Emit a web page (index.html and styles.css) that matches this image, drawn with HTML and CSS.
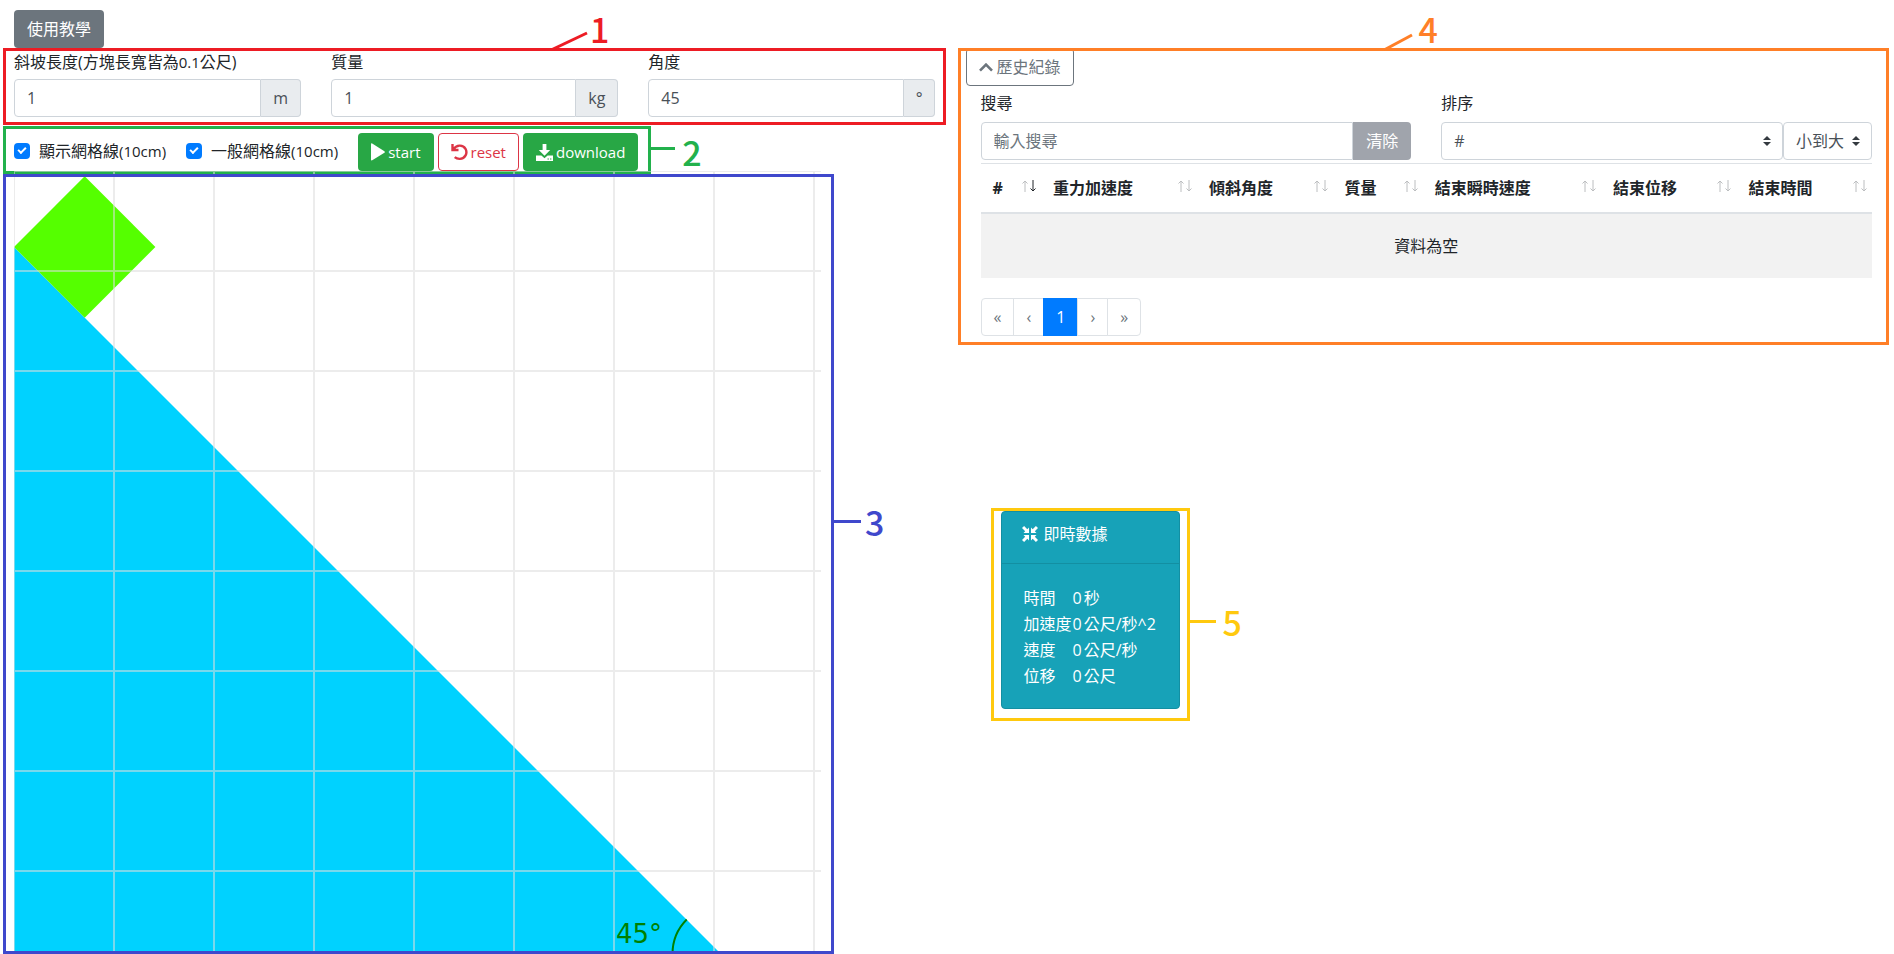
FILE: index.html
```html
<!DOCTYPE html>
<html lang="zh-Hant">
<head>
<meta charset="utf-8">
<meta name="viewport" content="width=device-width, initial-scale=1">
<title>斜坡模擬</title>
<link rel="stylesheet" href="styles.css">
</head>
<body>
<main class="page">
  <div class="column">
    <div class="toolbar"><button class="btn btn-secondary" type="button">使用教學</button></div>

    <section class="params">
      <div class="field">
        <label for="length">斜坡長度(方塊長寬皆為<span class="latin">0.1</span>公尺)</label>
        <div class="input-group"><input class="control" id="length" type="text" value="1"><span class="addon">m</span></div>
      </div>
      <div class="field">
        <label for="mass">質量</label>
        <div class="input-group"><input class="control" id="mass" type="text" value="1"><span class="addon">kg</span></div>
      </div>
      <div class="field">
        <label for="angle">角度</label>
        <div class="input-group"><input class="control" id="angle" type="text" value="45"><span class="addon">°</span></div>
      </div>
      <div class="frame frame-red">
        <svg class="leader leader-params" width="38" height="20" viewBox="0 0 38 20"><path d="M1 19 37 2" stroke="#ed1c24" stroke-width="3"/></svg>
        <span class="number number-params">1</span>
      </div>
    </section>

    <section class="actions">
      <label class="check"><input type="checkbox" checked><span>顯示網格線<span class="latin">(10cm)</span></span></label>
      <label class="check"><input type="checkbox" checked><span>一般網格線<span class="latin">(10cm)</span></span></label>
      <div class="buttons">
        <button class="btn btn-success latin" type="button"><svg width="14" height="18" viewBox="0 0 14 18"><path fill="currentColor" d="M0 1.2Q0 0 1.200.5L13.400 8.200q1 .8 0 1.600L1.200 17.300Q0 17.800 0 16.600z"/></svg>start</button>
        <button class="btn btn-outline-danger latin" type="button"><svg width="17" height="18" viewBox="0 0 17 18"><path fill="none" stroke="currentColor" stroke-width="2.4" d="M1.500 1v6h6M2.100 6.400C5.500 1.600 11.900 1.400 14.500 5.800c2.400 4.400-.4 9.800-5.600 10.100-2.200.1-3.900-.6-5.200-1.700"/></svg>reset</button>
        <button class="btn btn-success latin" type="button"><svg width="17" height="17" viewBox="0 0 17 17"><path fill="currentColor" d="M6.6 0h3.8v6h3.8L8.5 11.8 2.8 6h3.8zM0 11.4h5.4l3.1 2.8 3.1-2.8H17V17H0z"/><path fill="#28a745" d="M11.5 14.4h1.4v1.2h-1.4zM14 14.4h1.4v1.2H14z"/></svg>download</button>
      </div>
      <div class="frame frame-green"><span class="line line-green"></span><span class="number number-actions">2</span></div>
    </section>

    <section class="stage">
      <div class="viewport">
        <svg class="scene" width="807" height="783" viewBox="0 0 807 783" role="img" aria-label="斜坡">
          <path fill="#00d2ff" d="M0 76 707 783H0z"/>
          <path fill="#55ff00" d="M0 76 70.7 5.3 141.4 76 70.7 146.7z"/>
          <path fill="none" stroke="#dcdcdc" stroke-opacity=".55" stroke-width="2" d="M0 0V783M100 0V783M200 0V783M300 0V783M400 0V783M500 0V783M600 0V783M700 0V783M800 0V783M0 0H807M0 100H807M0 200H807M0 300H807M0 400H807M0 500H807M0 600H807M0 700H807"/>
          <path fill="none" stroke="#008000" stroke-width="2" d="M658.5 783a49 49 0 0 1 14.2-34.5"/>
          <text class="angle" x="602" y="772">45°</text>
        </svg>
      </div>
      <div class="frame frame-blue"><span class="line line-blue"></span><span class="number number-stage">3</span></div>
    </section>
  </div>

  <div class="column column-side">
    <section class="history">
      <button class="btn btn-outline-secondary" type="button"><svg width="14" height="9" viewBox="0 0 14 9"><path fill="none" stroke="currentColor" stroke-width="2.6" d="m1 7.6 6-6 6 6"/></svg>歷史紀錄</button>
      <div class="history-body">
        <div class="filters">
          <div class="field">
            <label for="search">搜尋</label>
            <div class="input-group"><input class="control" id="search" type="search" placeholder="輸入搜尋"><button class="btn btn-clear" type="button" disabled>清除</button></div>
          </div>
          <div class="field">
            <label for="sort">排序</label>
            <div class="input-group">
              <span class="select select-wide"><select id="sort"><option>#</option></select><svg width="8" height="10" viewBox="0 0 4 5"><path fill="#343a40" d="M2 0 0 2h4zm0 5L0 3h4z"/></svg></span>
              <span class="select"><select aria-label="排序方向"><option>小到大</option></select><svg width="8" height="10" viewBox="0 0 4 5"><path fill="#343a40" d="M2 0 0 2h4zm0 5L0 3h4z"/></svg></span>
            </div>
          </div>
        </div>
        <table class="records">
          <colgroup><col class="c-id"><col class="c-gravity"><col class="c-mid"><col class="c-mass"><col class="c-speed"><col class="c-mid"><col class="c-mid"></colgroup>
          <thead><tr>
            <th><div><span>#</span><svg width="14" height="12" viewBox="0 0 14 12"><path class="off" d="M3 12V1M.5 3.500 3 1l2.500 2.500"/><path class="on" d="M11 0v11M8.500 8.500 11 11l2.500-2.500"/></svg></div></th>
            <th><div><span>重力加速度</span><svg width="14" height="12" viewBox="0 0 14 12"><path class="off" d="M3 12V1M.5 3.500 3 1l2.500 2.500M11 0v11M8.500 8.500 11 11l2.500-2.500"/></svg></div></th>
            <th><div><span>傾斜角度</span><svg width="14" height="12" viewBox="0 0 14 12"><path class="off" d="M3 12V1M.5 3.500 3 1l2.500 2.500M11 0v11M8.500 8.500 11 11l2.500-2.500"/></svg></div></th>
            <th><div><span>質量</span><svg width="14" height="12" viewBox="0 0 14 12"><path class="off" d="M3 12V1M.5 3.500 3 1l2.500 2.500M11 0v11M8.500 8.500 11 11l2.500-2.500"/></svg></div></th>
            <th><div><span>結束瞬時速度</span><svg width="14" height="12" viewBox="0 0 14 12"><path class="off" d="M3 12V1M.5 3.500 3 1l2.500 2.500M11 0v11M8.500 8.500 11 11l2.500-2.500"/></svg></div></th>
            <th><div><span>結束位移</span><svg width="14" height="12" viewBox="0 0 14 12"><path class="off" d="M3 12V1M.5 3.500 3 1l2.500 2.500M11 0v11M8.500 8.500 11 11l2.500-2.500"/></svg></div></th>
            <th><div><span>結束時間</span><svg width="14" height="12" viewBox="0 0 14 12"><path class="off" d="M3 12V1M.5 3.500 3 1l2.500 2.500M11 0v11M8.500 8.500 11 11l2.500-2.500"/></svg></div></th>
          </tr></thead>
          <tbody><tr><td colspan="7">資料為空</td></tr></tbody>
        </table>
        <nav class="pagination" aria-label="分頁">
          <button type="button" disabled>«</button><button type="button" disabled>‹</button><button class="current" type="button" aria-current="page">1</button><button type="button" disabled>›</button><button type="button" disabled>»</button>
        </nav>
      </div>
      <div class="frame frame-orange">
        <svg class="leader leader-history" width="30" height="18" viewBox="0 0 30 18"><path d="M1 17 29 2" stroke="#ff7f27" stroke-width="3"/></svg>
        <span class="number number-history">4</span>
      </div>
    </section>

    <section class="live">
      <div class="card">
        <header><svg width="16" height="16" viewBox="0 0 16 16"><path fill="currentColor" d="M7 7H1.500l1.700-1.700L0 2.100 2.100 0l3.200 3.200L7 1.500zM9 7h5.500l-1.700-1.700L16 2.100 13.900 0l-3.200 3.200L9 1.500zM7 9H1.500l1.700 1.700L0 13.900 2.100 16l3.200-3.200L7 14.500zM9 9h5.500l-1.700 1.700 3.200 3.200-2.100 2.100-3.200-3.200L9 14.500z"/></svg>即時數據</header>
        <dl>
          <dt>時間</dt><dd>0<span>秒</span></dd>
          <dt>加速度</dt><dd>0<span>公尺/秒^2</span></dd>
          <dt>速度</dt><dd>0<span>公尺/秒</span></dd>
          <dt>位移</dt><dd>0<span>公尺</span></dd>
        </dl>
      </div>
      <span class="line line-yellow"></span><span class="number number-live">5</span>
    </section>
  </div>
</main>
</body>
</html>
```
FILE: styles.css
```css
*, *::before, *::after { box-sizing: border-box; }

body {
  margin: 0;
  background: #fff;
  color: #212529;
  font: 16px/24px "Open Sans", "Noto Sans CJK TC", sans-serif;
}

button, input, select { margin: 0; font: inherit; color: inherit; }
label { display: block; }
.latin { font-size: 15px; }

.page {
  display: grid;
  grid-template-columns: 1fr 1fr;
  gap: 30px;
  height: 100vh;
  min-height: 760px;
  padding: 10px 7px 0 14px;
  overflow: hidden;
}
.column { display: flex; flex-direction: column; min-width: 0; min-height: 0; }
.column-side { padding-top: 38px; }
.toolbar { display: flex; }

/* Buttons */
.btn {
  display: inline-flex;
  align-items: center;
  gap: 3px;
  height: 38px;
  padding: 0 12px;
  border: 1px solid transparent;
  border-radius: 4px;
  background: none;
  white-space: nowrap;
}
.btn-secondary { background: #6c757d; color: #fff; }
.btn-success { background: #28a745; color: #fff; }
.btn-outline-danger { border-color: #dc3545; color: #dc3545; }
.btn-outline-secondary { gap: 4px; border-color: #6c757d; color: #6c757d; background: #fff; }
.btn-clear { background: #a0a4ac; color: #fff; border-radius: 0 4px 4px 0; }

/* Form fields */
.params, .actions, .stage, .history, .live { position: relative; }
.params {
  display: grid;
  grid-template-columns: repeat(3, 1fr);
  gap: 30px;
  padding-bottom: 9px;
}
.field { min-width: 0; }
.field > label { margin-bottom: 7px; }
.params label { padding-top: 2px; margin-bottom: 5px; }
.input-group { display: flex; height: 38px; }
.control {
  flex: 1;
  min-width: 0;
  padding: 0 12px;
  border: 1px solid #ced4da;
  border-radius: 4px 0 0 4px;
  background: #fff;
  color: #495057;
  outline: 0;
  appearance: none;
}
.control::placeholder { color: #6c757d; opacity: 1; }
.addon {
  display: flex;
  align-items: center;
  padding: 0 12px;
  border: 1px solid #ced4da;
  border-left: 0;
  border-radius: 0 4px 4px 0;
  background: #e9ecef;
  color: #495057;
}
.select { position: relative; display: flex; }
.select-wide { flex: 1; }
.select select {
  width: 100%;
  padding: 0 26px 0 12px;
  border: 1px solid #ced4da;
  border-radius: 4px;
  background: #fff;
  color: #495057;
  appearance: none;
}
.select svg { position: absolute; right: 12px; top: 14px; pointer-events: none; }

.actions {
  display: flex;
  align-items: center;
  align-self: flex-start;
  gap: 20px;
  padding-top: 7px;
}
.check { display: flex; align-items: center; gap: 9px; margin-bottom: 3px; }
.check input {
  appearance: none;
  width: 16px;
  height: 16px;
  border-radius: 4px;
  background: #007bff;
  display: grid;
  place-items: center;
}
.check input:checked::before {
  content: "";
  width: 8px;
  height: 5px;
  border: solid #fff;
  border-width: 0 0 2px 2px;
  transform: rotate(-45deg);
  margin-bottom: 2px;
}
.buttons { display: flex; gap: 4px; }

/* Simulation */
.stage { flex: 1; min-height: 0; align-self: flex-start; }
.viewport { height: 100%; overflow: hidden; }
.scene { display: block; }
.angle { font: 26px "DejaVu Sans", sans-serif; fill: #008000; }

/* History */
.history { padding-bottom: 9px; }
.history-body { padding: 5px 15px 0; }
.filters { display: grid; grid-template-columns: 1fr 1fr; gap: 30px; }
.records {
  width: 100%;
  margin: 3px 0 20px;
  border-collapse: collapse;
  table-layout: fixed;
}
.c-id { width: 6.8%; }
.c-gravity { width: 17.5%; }
.c-mid { width: 15.2%; }
.c-mass { width: 10.1%; }
.c-speed { width: 20%; }
.records th {
  height: 49px;
  padding: 0 5px 0 12px;
  border-top: 1px solid #dee2e6;
  border-bottom: 2px solid #dee2e6;
  text-align: left;
}
.records th div { display: flex; align-items: center; justify-content: space-between; }
.records th span { white-space: nowrap; }
.records th svg { fill: none; stroke-width: 1; flex: none; margin-bottom: 4px; }
.off { stroke: #bcbec0; }
.on { stroke: #212529; }
.records td { height: 65px; padding: 0; background: #f2f2f2; text-align: center; }

.pagination { display: flex; }
.pagination button {
  height: 38px;
  min-width: 30px;
  padding: 0 12px;
  margin-left: -1px;
  border: 1px solid #dee2e6;
  background: #fff;
  color: #6c757d;
}
.pagination button:first-child { margin-left: 0; border-radius: 4px 0 0 4px; }
.pagination button:last-child { border-radius: 0 4px 4px 0; }
.pagination .current { background: #007bff; border-color: #007bff; color: #fff; }

/* Live data */
.live {
  align-self: flex-start;
  margin: 163px 0 0 25px;
  padding: 0 7px 9px;
  border: 3px solid #ffc90e;
}
.card {
  width: 179px;
  border: 1px solid #138fa2;
  border-radius: 4px;
  background: #17a2b8;
  color: #fff;
}
.card header {
  display: flex;
  align-items: center;
  gap: 6px;
  height: 52px;
  padding: 0 20px 6px;
  border-bottom: 1px solid #138fa2;
}
.card dl {
  display: grid;
  grid-template-columns: 49px 1fr;
  margin: 0;
  padding: 21px 0 19px 22px;
  line-height: 26px;
}
.card dt { white-space: nowrap; }
.card dd { display: flex; gap: 2px; margin: 0; white-space: nowrap; }

/* Annotation frames */
.frame { position: absolute; border: 3px solid; pointer-events: none; }
.frame-red { inset: 0 -10px 1px -11px; color: #ed1c24; }
.frame-green { inset: 0 -13px -3px -11px; color: #22b14c; }
.frame-blue { inset: 3px -13px 0 -11px; color: #3f48cc; }
.frame-orange { inset: 0 -2px 0 -8px; color: #ff7f27; }
.number { position: absolute; font: 500 34px/40px "Noto Sans CJK TC", sans-serif; }
.leader { position: absolute; bottom: 100%; }
.line { position: absolute; left: 100%; height: 3px; background: currentColor; }
.leader-params { left: 544px; }
.number-params { left: 584px; top: -42px; }
.line-green { top: 18px; width: 27px; }
.number-actions { left: calc(100% + 34px); top: 3px; }
.line-blue { top: 343px; width: 30px; }
.number-stage { left: calc(100% + 34px); top: 325px; }
.leader-history { left: 422px; }
.number-history { left: 458px; top: -42px; }
.live .line, .live .number { color: #ffc90e; }
.line-yellow { top: 109px; width: 29px; }
.number-live { left: calc(100% + 36px); top: 91px; }
```
